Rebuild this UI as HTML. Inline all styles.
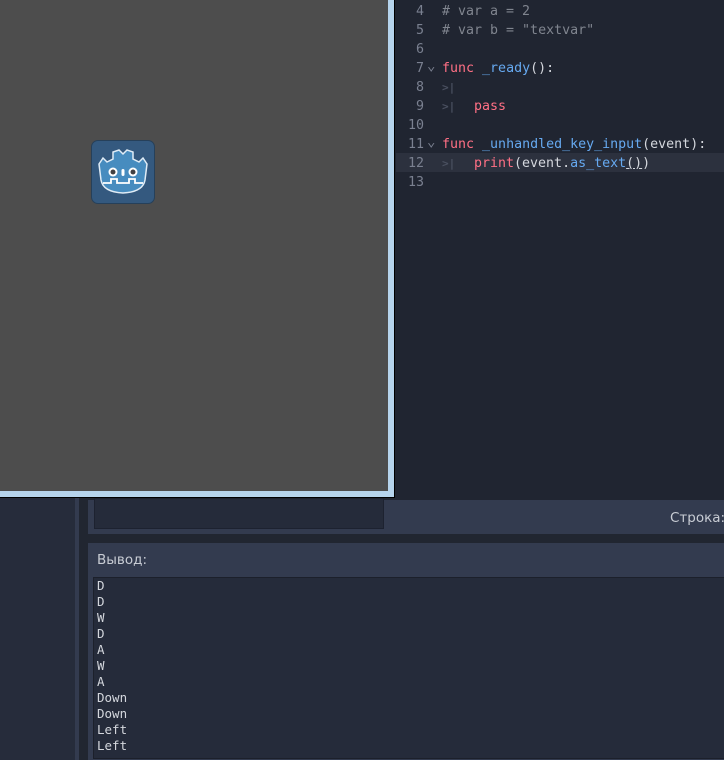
<!DOCTYPE html><html><head><meta charset="utf-8"><style>
body{margin:0;width:724px;height:760px;overflow:hidden;background:#212631;position:relative;font-family:"DejaVu Sans Mono","Liberation Mono",monospace;}
div{position:absolute;box-sizing:border-box}
.c{font-size:13.3px;white-space:pre;color:#d4d7dd;line-height:19px}
.n{position:absolute;width:26px;text-align:right;left:398px;color:#7a8090}
.k{color:#ff7085}.f{color:#66a9f0}.cm{color:#80858f}.t{color:#4a5060}
.o{font-size:12.5px;line-height:16px;color:#d4d7dd;white-space:pre}
</style></head><body>
<div style="left:396px;top:0;width:328px;height:500px;background:#202531"></div>
<div style="left:396px;top:153px;width:328px;height:19px;background:#2c313e"></div>
<div class="c" style="left:0;top:1px;width:724px;height:200px">
<span class="n" style="top:1px">4</span><span class="n" style="top:20px">5</span><span class="n" style="top:39px">6</span><span class="n" style="top:58px">7</span><span class="n" style="top:77px">8</span><span class="n" style="top:96px">9</span><span class="n" style="top:115px">10</span><span class="n" style="top:134px">11</span><span class="n" style="top:153px">12</span><span class="n" style="top:172px">13</span>
<span style="position:absolute;left:427px;top:56px;color:#7a8090;font-size:14px">⌄</span><span style="position:absolute;left:427px;top:132px;color:#7a8090;font-size:14px">⌄</span>
<span style="position:absolute;left:442px;top:1px" class="cm"># var a = 2</span>
<span style="position:absolute;left:442px;top:20px" class="cm"># var b = "textvar"</span>
<span style="position:absolute;left:442px;top:58px"><span class="k">func</span> <span class="f">_ready</span>():</span>
<span style="position:absolute;left:442px;top:77px;font-size:11px;font-weight:bold" class="t">&gt;|</span>
<span style="position:absolute;left:442px;top:96px;font-size:11px;font-weight:bold" class="t">&gt;|</span><span style="position:absolute;left:474px;top:96px" class="k">pass</span>
<span style="position:absolute;left:442px;top:134px"><span class="k">func</span> <span class="f">_unhandled_key_input</span>(event):</span>
<span style="position:absolute;left:442px;top:153px;font-size:11px;font-weight:bold" class="t">&gt;|</span><span style="position:absolute;left:474px;top:153px"><span class="k">print</span>(event.<span class="f">as_text</span><span style="text-decoration:underline">()</span>)</span>
</div>
<div style="left:0;top:0;width:395px;height:498px;background:#000"></div>
<div style="left:0;top:0;width:394px;height:497px;background:#b6d4ec"></div>
<div style="left:0;top:0;width:388px;height:491px;background:#4d4d4d"></div>
<div style="left:91px;top:140px;width:64px;height:64px;background:#34597f;border-radius:7px;border:1px solid #26405a"></div>
<svg style="position:absolute;left:97px;top:146px" width="52" height="52" viewBox="0 0 52 52"><path d="M10 16 L16 13 L16 6 L22 4 L26 8 L30 4 L36 6 L36 13 L42 16 L46 12 L50 18 L48 34 Q46 46 26 47 Q6 46 4 34 L2 18 L6 12 Z" fill="#478cbf" stroke="#e0ecf6" stroke-width="1.5"/><circle cx="16" cy="26" r="4.5" fill="#fff"/><circle cx="16" cy="26" r="2.5" fill="#414042"/><circle cx="36" cy="26" r="4.5" fill="#fff"/><circle cx="36" cy="26" r="2.5" fill="#414042"/><rect x="24.5" y="23" width="3" height="7" rx="1.5" fill="#fff"/><path d="M6 37 L14 37 L14 33 L20 33 L20 37 L32 37 L32 33 L38 33 L38 37 L46 37" fill="none" stroke="#fff" stroke-width="1.8"/></svg>
<div style="left:0;top:498px;width:75px;height:262px;background:#262c3b"></div>
<div style="left:75px;top:498px;width:4px;height:262px;background:#333b4f"></div>
<div style="left:88px;top:500px;width:636px;height:34px;background:#333b4f"></div>
<div style="left:94px;top:498px;width:290px;height:31px;background:#252b3a;border:1px solid #1d2230"></div>
<div style="left:670px;top:510px;font-family:'DejaVu Sans','Liberation Sans',sans-serif;font-size:13.5px;color:#c8ccd4">Строка:</div>
<div style="left:88px;top:543px;width:636px;height:217px;background:#333b4f"></div>
<div style="left:97px;top:552px;font-family:'DejaVu Sans','Liberation Sans',sans-serif;font-size:13.5px;color:#c8ccd4">Вывод:</div>
<div style="left:93px;top:577px;width:640px;height:182px;background:#252b3a;border:1px solid #1c202b"></div>
<div class="o" style="left:97px;top:578px">D
D
W
D
A
W
A
Down
Down
Left
Left</div>
</body></html>
